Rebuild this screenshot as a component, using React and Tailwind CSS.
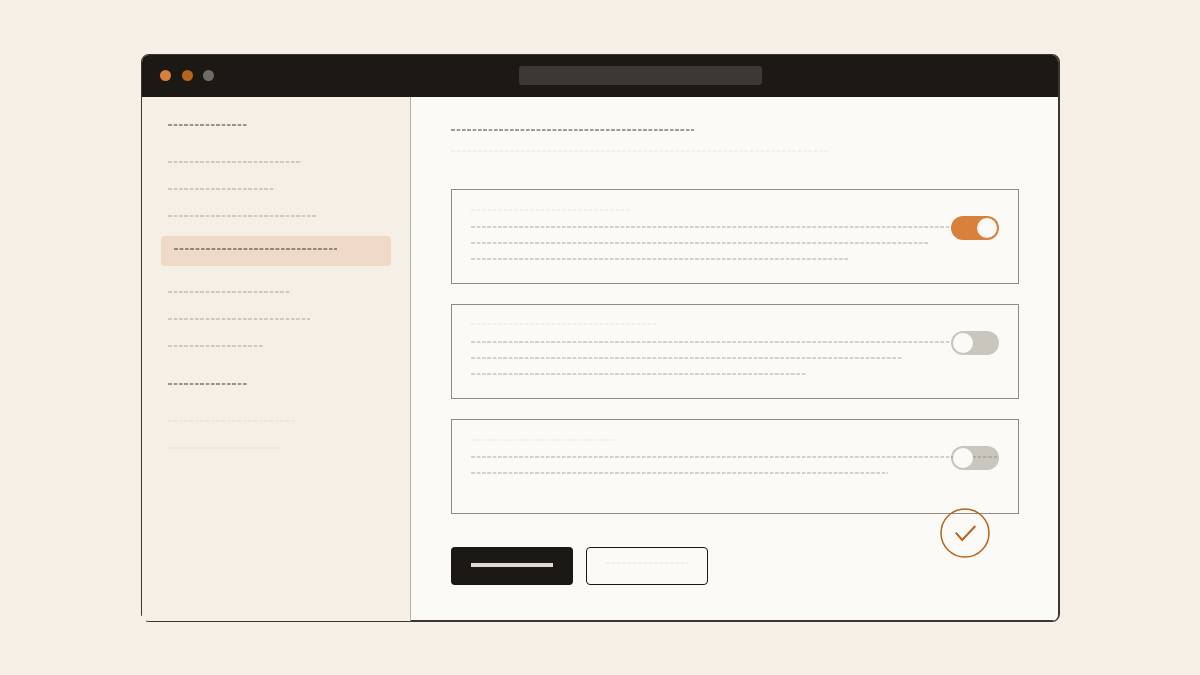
const dashes = {
  strong: "bg-[repeating-linear-gradient(90deg,transparent_0,#1c19146b_0.5px,#1c19146b_3.5px,transparent_4.5px,transparent_5.33px)]",
  item: "bg-[repeating-linear-gradient(90deg,transparent_0,#7873694d_0.5px,#7873694d_3.5px,transparent_4.5px,transparent_5.33px)]",
  faint: "bg-[repeating-linear-gradient(90deg,transparent_0,#78736912_0.5px,#78736912_3.5px,transparent_4.5px,transparent_5.33px)]",
};

const Dash = ({ kind = "item", className = "" }) => (
  <div className={`h-0.5 shrink-0 ${dashes[kind]} ${className}`} />
);

const Toggle = ({ on }) => (
  <div
    className={`absolute top-[26px] right-[19px] flex h-6 w-12 items-center rounded-full px-0.5 ${
      on ? "justify-end bg-[#d9803c]" : "justify-start bg-[#c9c6be]"
    }`}
  >
    <div className="relative z-20 h-5 w-5 rounded-full bg-[#fbfaf6]" />
  </div>
);

const Card = ({ on, children }) => (
  <div className="relative flex h-[95px] flex-col border border-[#8f8c83] pl-[19px]">
    {children}
    <Toggle on={on} />
  </div>
);

const App = () => {
  return (
    <div className="flex h-[675px] w-[1200px] items-center justify-center bg-[#f5efe6]">
      <div className="relative mt-px ml-px">
        <div className="flex h-[568px] w-[919px] flex-col overflow-hidden rounded-lg border border-r-2 border-[#3a3732]">
          <div className="flex h-[42px] shrink-0 items-center gap-[10.5px] bg-[#1c1914] pb-px pl-[18px]">
            <div className="h-[11px] w-[11px] rounded-full bg-[#d9803c]" />
            <div className="h-[11px] w-[11px] rounded-full bg-[#b5651d]" />
            <div className="h-[11px] w-[11px] rounded-full bg-[#6f6c66]" />
            <div className="ml-[294.5px] h-[19px] w-[243px] rounded-[3px] bg-[#3c3934]" />
          </div>

          <div className="flex min-h-0 flex-1">
            <div className="flex w-[269px] shrink-0 flex-col border-r border-[#b5b1a7] bg-[#f5efe6] pt-[27px] pl-[26px]">
              <Dash kind="strong" className="w-20" />
              <Dash className="mt-[35px] w-[134px]" />
              <Dash className="mt-[25px] w-[107px]" />
              <Dash className="mt-[25px] w-[149px]" />
              <div className="mt-[19px] -ml-[7px] h-[30px] w-[230px] rounded-[4px] border border-[#ecd9c4] bg-[#eedac6] pt-[11px] pl-3">
                <Dash kind="strong" className="w-[163px]" />
              </div>
              <Dash className="mt-[25px] w-[122px]" />
              <Dash className="mt-[25px] w-[142px]" />
              <Dash className="mt-[25px] w-[95px]" />
              <Dash kind="strong" className="mt-9 w-20" />
              <Dash kind="faint" className="mt-[35px] w-32" />
              <Dash kind="faint" className="mt-[25px] w-28" />
            </div>

            <div className="relative flex min-w-0 flex-1 flex-col border-b border-[#3a3732] bg-[#fbfaf6] pt-8 pl-10">
              <Dash kind="strong" className="w-[243px]" />
              <Dash kind="faint" className="mt-[19px] w-[379px]" />

              <div className="mt-[37px] flex w-[568px] flex-col gap-5">
                <Card on>
                  <Dash kind="faint" className="mt-[19px] w-[161px]" />
                  <Dash className="mt-[15px] w-[480px]" />
                  <Dash className="mt-[14px] w-[458px]" />
                  <Dash className="mt-[14px] w-[378px]" />
                </Card>
                <Card>
                  <Dash kind="faint" className="mt-[18px] w-[188px]" />
                  <Dash className="mt-4 w-[480px]" />
                  <Dash className="mt-[14px] w-[431px]" />
                  <Dash className="mt-[14px] w-[336px]" />
                </Card>
                <Card>
                  <Dash kind="faint" className="mt-[19px] w-[145px]" />
                  <Dash className="relative z-10 mt-[15px] w-[526px]" />
                  <Dash className="mt-[14px] w-[417px]" />
                </Card>
              </div>

              <div className="mt-[33px] flex gap-[13px]">
                <div className="flex h-[38px] w-[122px] items-start justify-center rounded-[4px] bg-[#1c1914] pt-4">
                  <div className="h-1 w-[82px] bg-[#dedbd0]" />
                </div>
                <div className="flex h-[38px] w-[122px] items-start justify-center rounded-[4px] border border-[#1c1914] pt-[14px]">
                  <Dash kind="faint" className="w-[82px]" />
                </div>
              </div>

              <svg
                className="absolute top-[411px] left-[528.5px]"
                width="50"
                height="50"
                viewBox="0 0 50 50"
                fill="none"
                stroke="#b5651d"
              >
                <circle cx="25" cy="25" r="24" strokeWidth="1.5" />
                <path d="M15.8 24.7 L22.2 32 L35.3 18" strokeWidth="2" />
              </svg>
            </div>
          </div>
        </div>
        <div className="absolute bottom-0 left-0 h-[6px] w-[5px] bg-[#f5efe6]" />
      </div>
    </div>
  );
};

export default App;
